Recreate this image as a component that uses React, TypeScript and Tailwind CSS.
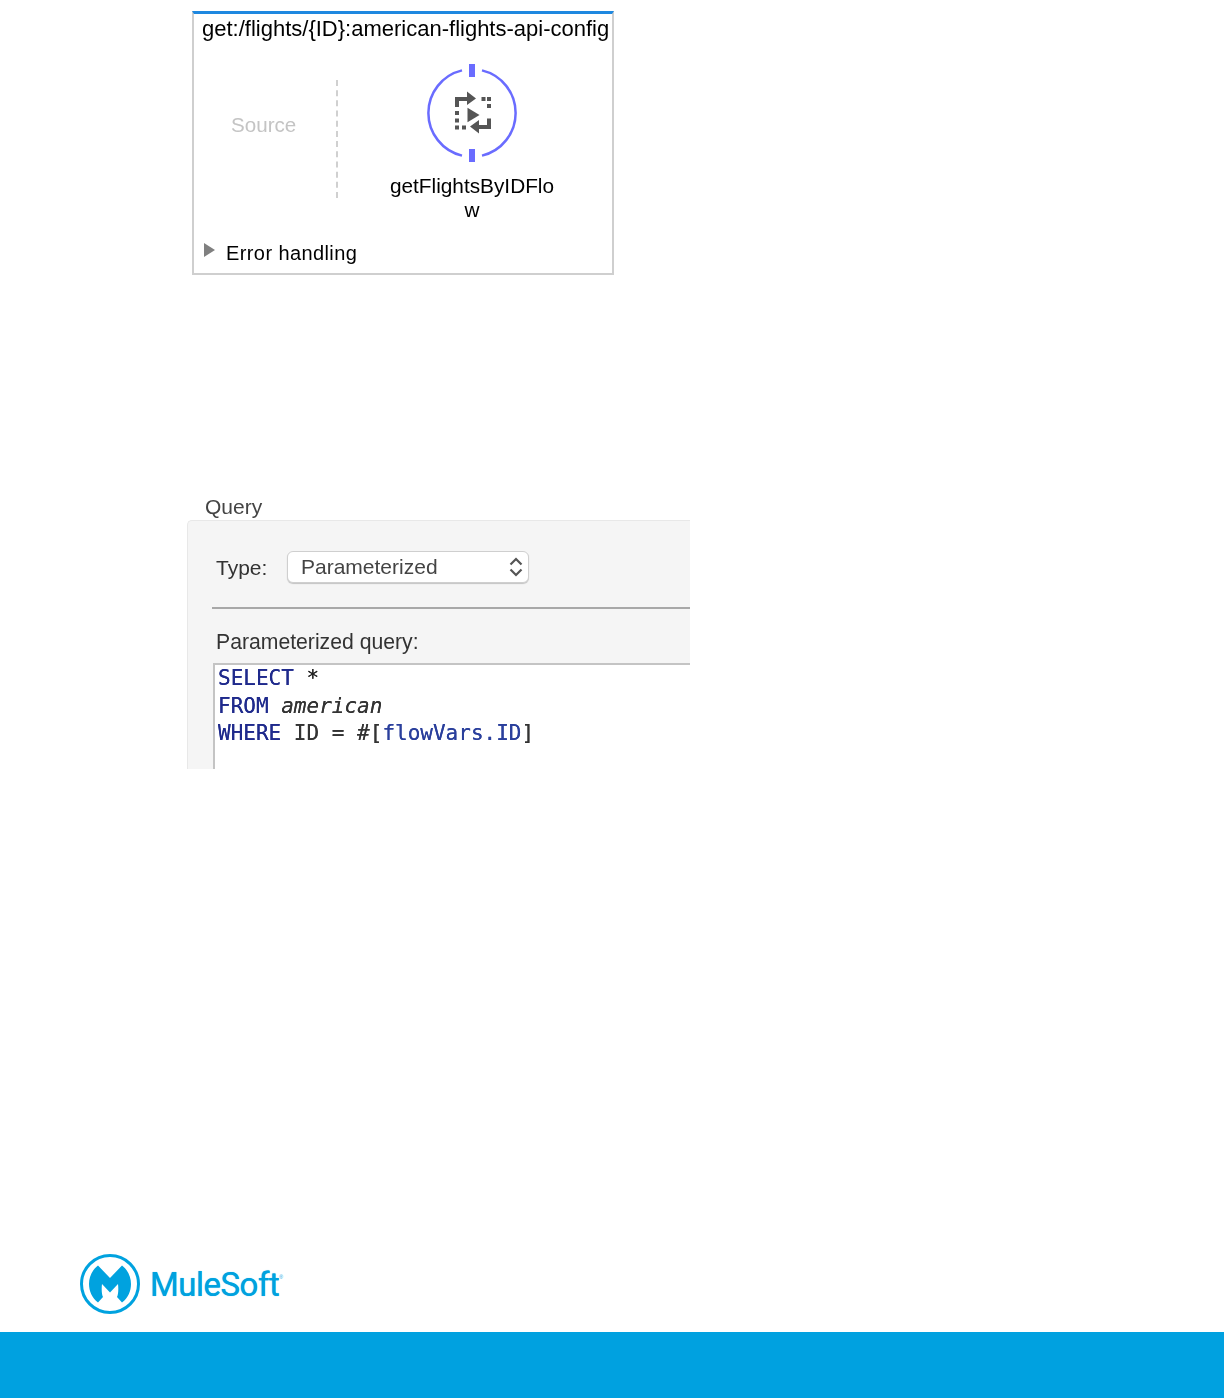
export default function App() {
  return (
    <div className="flex h-[1398px] w-[1224px] flex-col overflow-hidden bg-white font-['Liberation_Sans',sans-serif]">
      {/* flow card */}
      <div className="ml-[192px] mt-[11px] flex h-[264px] w-[422px] flex-col border-2 border-t-[3px] border-[#cfcfcf] border-t-[#1e88e0] blur-[0.3px]">
        <div className="ml-[8px] mt-[2px] whitespace-nowrap text-[22px] leading-[26px] text-black">get:/flights/{"{ID}"}:american-flights-api-config</div>
        <div className="flex h-[189px] items-start">
          <div className="ml-[37px] mt-[70px] w-[70px] text-[20.6px] leading-[26px] text-[#c4c4c4]">Source</div>
          <div className="ml-[35px] mt-[38px] h-[118px] border-l-2 border-dashed border-[#d0d0d0]" />
          <div className="ml-[49px] mt-[22px] flex w-[170px] flex-col items-center">
            <svg width="92" height="98" viewBox="0 0 92 98" fill="none">
              <path d="M36 6.4 A43.8 43.8 0 0 0 36 91.6 M56 6.4 A43.8 43.8 0 0 1 56 91.6" stroke="#6a6cff" strokeWidth="2.5" />
              <rect x="43" y="0" width="6" height="13" fill="#6a6cff" />
              <rect x="43" y="85" width="6" height="13" fill="#6a6cff" />
              <g fill="#555">
                <path d="M29 43 V33 H41 V27.5 L50 34.5 L41 41 V37 H33 V43 Z" />
                <path d="M65 54.5 V65 H53 V69.5 L44 62.5 L53 56 V61 H61 V54.5 Z" />
                <path d="M41.5 43.7 L53.5 51 L41.5 58.3 Z" />
                <rect x="55.5" y="33" width="4" height="4" />
                <rect x="61" y="33" width="4" height="4" />
                <rect x="61" y="40" width="4" height="4" />
                <rect x="29" y="47" width="4" height="4" />
                <rect x="29" y="54.5" width="4" height="4" />
                <rect x="29" y="61.5" width="4" height="4" />
                <rect x="36" y="61.5" width="4" height="4" />
              </g>
            </svg>
            <div className="mt-[12px] w-[170px] text-center text-[20.8px] leading-[24px] text-black">getFlightsByIDFlo<br />w</div>
          </div>
        </div>
        <div className="mt-[9px] flex items-start">
          <svg className="ml-[10px] mt-[3px]" width="11" height="14" viewBox="0 0 11 14"><path d="M0 0 L11 7 L0 14 Z" fill="#808080" /></svg>
          <span className="ml-[11px] text-[20px] leading-[26px] tracking-[0.4px] text-black">Error handling</span>
        </div>
      </div>

      {/* query panel */}
      <div className="ml-[205px] mt-[220px] text-[21px] leading-[24px] text-[#444] blur-[0.3px]">Query</div>
      <div className="ml-[187px] mt-[1px] h-[249px] w-[503px] overflow-hidden rounded-tl-[5px] border-l border-t border-[#e8e8e8] bg-[#f5f5f5] blur-[0.3px]">
        <div className="ml-[28px] mt-[30px] flex items-center">
          <span className="mt-[2px] w-[71px] text-[21px] leading-[24px] text-[#333]">Type:</span>
          <div className="flex h-[32px] w-[242px] items-center justify-between rounded-[6px] border border-[#cfcfcf] bg-white pl-[13px] pr-[5px] shadow-[0_1px_1px_rgba(0,0,0,0.2)]">
            <span className="text-[21px] leading-[24px] text-[#444]">Parameterized</span>
            <svg width="14" height="22" viewBox="0 0 14 22" fill="none" stroke="#555" strokeWidth="2.2"><path d="M1.5 8.5 L7 3 L12.5 8.5 M1.5 13.5 L7 19 L12.5 13.5" /></svg>
          </div>
        </div>
        <div className="ml-[24px] mt-[24px] h-[2px] bg-[#a8a8a8]" />
        <div className="ml-[28px] mt-[21px] text-[21.2px] leading-[24px] text-[#333]">Parameterized query:</div>
        <div className="ml-[25px] mt-[9px] h-[120px] border-l-2 border-t-2 border-[#c4c4c4] bg-white pl-[3px] font-['DejaVu_Sans_Mono',monospace] text-[21px] leading-[27.5px] [text-shadow:0_0_0.6px_currentColor]">
          <div className="whitespace-nowrap text-[#1f2a8c]">SELECT <span className="text-[#222]">*</span></div>
          <div className="whitespace-nowrap text-[#1f2a8c]">FROM <span className="italic text-[#333]">american</span></div>
          <div className="whitespace-nowrap text-[#1f2a8c]">WHERE <span className="text-[#333]">ID = #[</span><span className="text-[#2a3f9c]">flowVars.ID</span><span className="text-[#333]">]</span></div>
        </div>
      </div>

      {/* logo */}
      <div className="ml-[80px] mt-[485px] flex h-[60px] items-center">
        <svg width="60" height="60" viewBox="0 0 60 60" fill="none">
          <circle cx="30" cy="30" r="28.5" stroke="#00a2df" strokeWidth="3" />
          <path d="M18 11.5 L30 24 L42 11.5 C48 16 51 23 51 30 C51 37 48 44 42 48.5 L37 43 C38.5 40 38.5 34 38 30 L30 38.5 L22 30 C21.5 34 21.5 40 23 43 L18 48.5 C12 44 9 37 9 30 C9 23 12 16 18 11.5 Z" fill="#00a2df" />
        </svg>
        <span className="ml-[10px] mt-[2px] font-['Roboto',sans-serif] text-[33px] font-normal leading-[40px] tracking-[-0.5px] text-[#00a2df] [text-shadow:0_0_0.7px_currentColor]">MuleSoft</span>
        <span className="mb-[14px] text-[5px] leading-none text-[#00a2df]">®</span>
      </div>

      {/* footer bar */}
      <div className="mt-[18px] h-[66px] bg-[#00a1e0]" />
    </div>
  );
}
